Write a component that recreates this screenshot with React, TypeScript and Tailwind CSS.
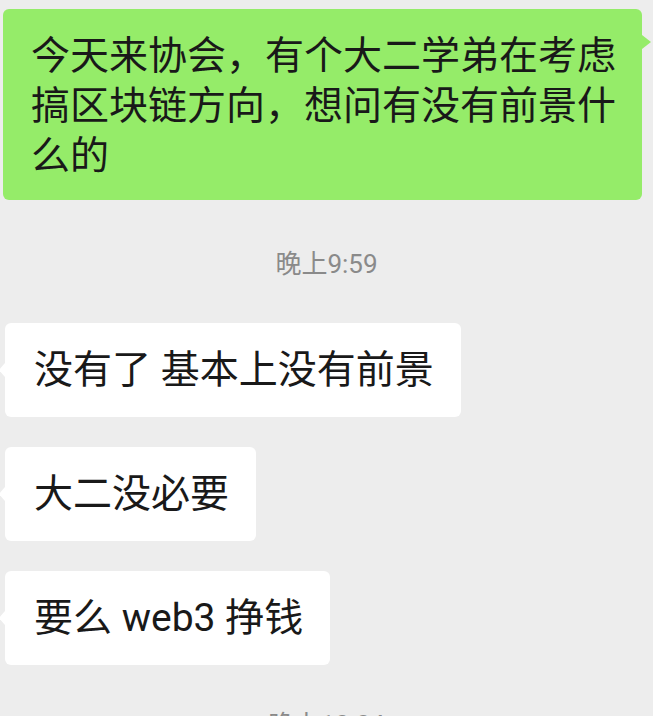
import React from "react";

const font = { fontFamily: 'Roboto, "Noto Sans CJK SC", sans-serif' };

function LeftBubble({ children }: { children: React.ReactNode }) {
  return (
    <div className="flex pl-[5px]">
      <div className="relative rounded-[6px] bg-white pl-[29px] pr-[27px] pt-[22px] pb-[22px] text-[39px] leading-[50px] text-[#191919]">
        <span className="absolute left-[-6px] top-[40px] h-0 w-0 border-y-[7px] border-r-[6px] border-y-transparent border-r-white" />
        {children}
      </div>
    </div>
  );
}

function Time({ children }: { children: React.ReactNode }) {
  return (
    <div className="flex justify-center text-[26px] leading-[30px] text-[#8a8a8a]">
      {children}
    </div>
  );
}

export default function App() {
  return (
    <div
      className="flex h-[716px] w-[653px] flex-col overflow-hidden bg-[#ededed]"
      style={font}
    >
      <div className="mt-[9px] flex pl-[3px]">
        <div className="relative w-[639px] rounded-[6px] bg-[#95ec69] pl-[28px] pr-[22px] pt-[22px] pb-[19px] text-[39px] leading-[50px] text-[#191919]">
          <span className="absolute right-[-9px] top-[26px] h-0 w-0 border-y-[7px] border-l-[9px] border-y-transparent border-l-[#95ec69]" />
          今天来协会，有个大二学弟在考虑搞区块链方向，想问有没有前景什么的
        </div>
      </div>
      <div className="mt-[49px]">
        <Time>晚上9:59</Time>
      </div>
      <div className="mt-[44px] flex flex-col gap-[30px]">
        <LeftBubble>没有了 基本上没有前景</LeftBubble>
        <LeftBubble>大二没必要</LeftBubble>
        <LeftBubble>要么 web3 挣钱</LeftBubble>
      </div>
      <div className="mt-[45px]">
        <Time>晚上10:04</Time>
      </div>
    </div>
  );
}
